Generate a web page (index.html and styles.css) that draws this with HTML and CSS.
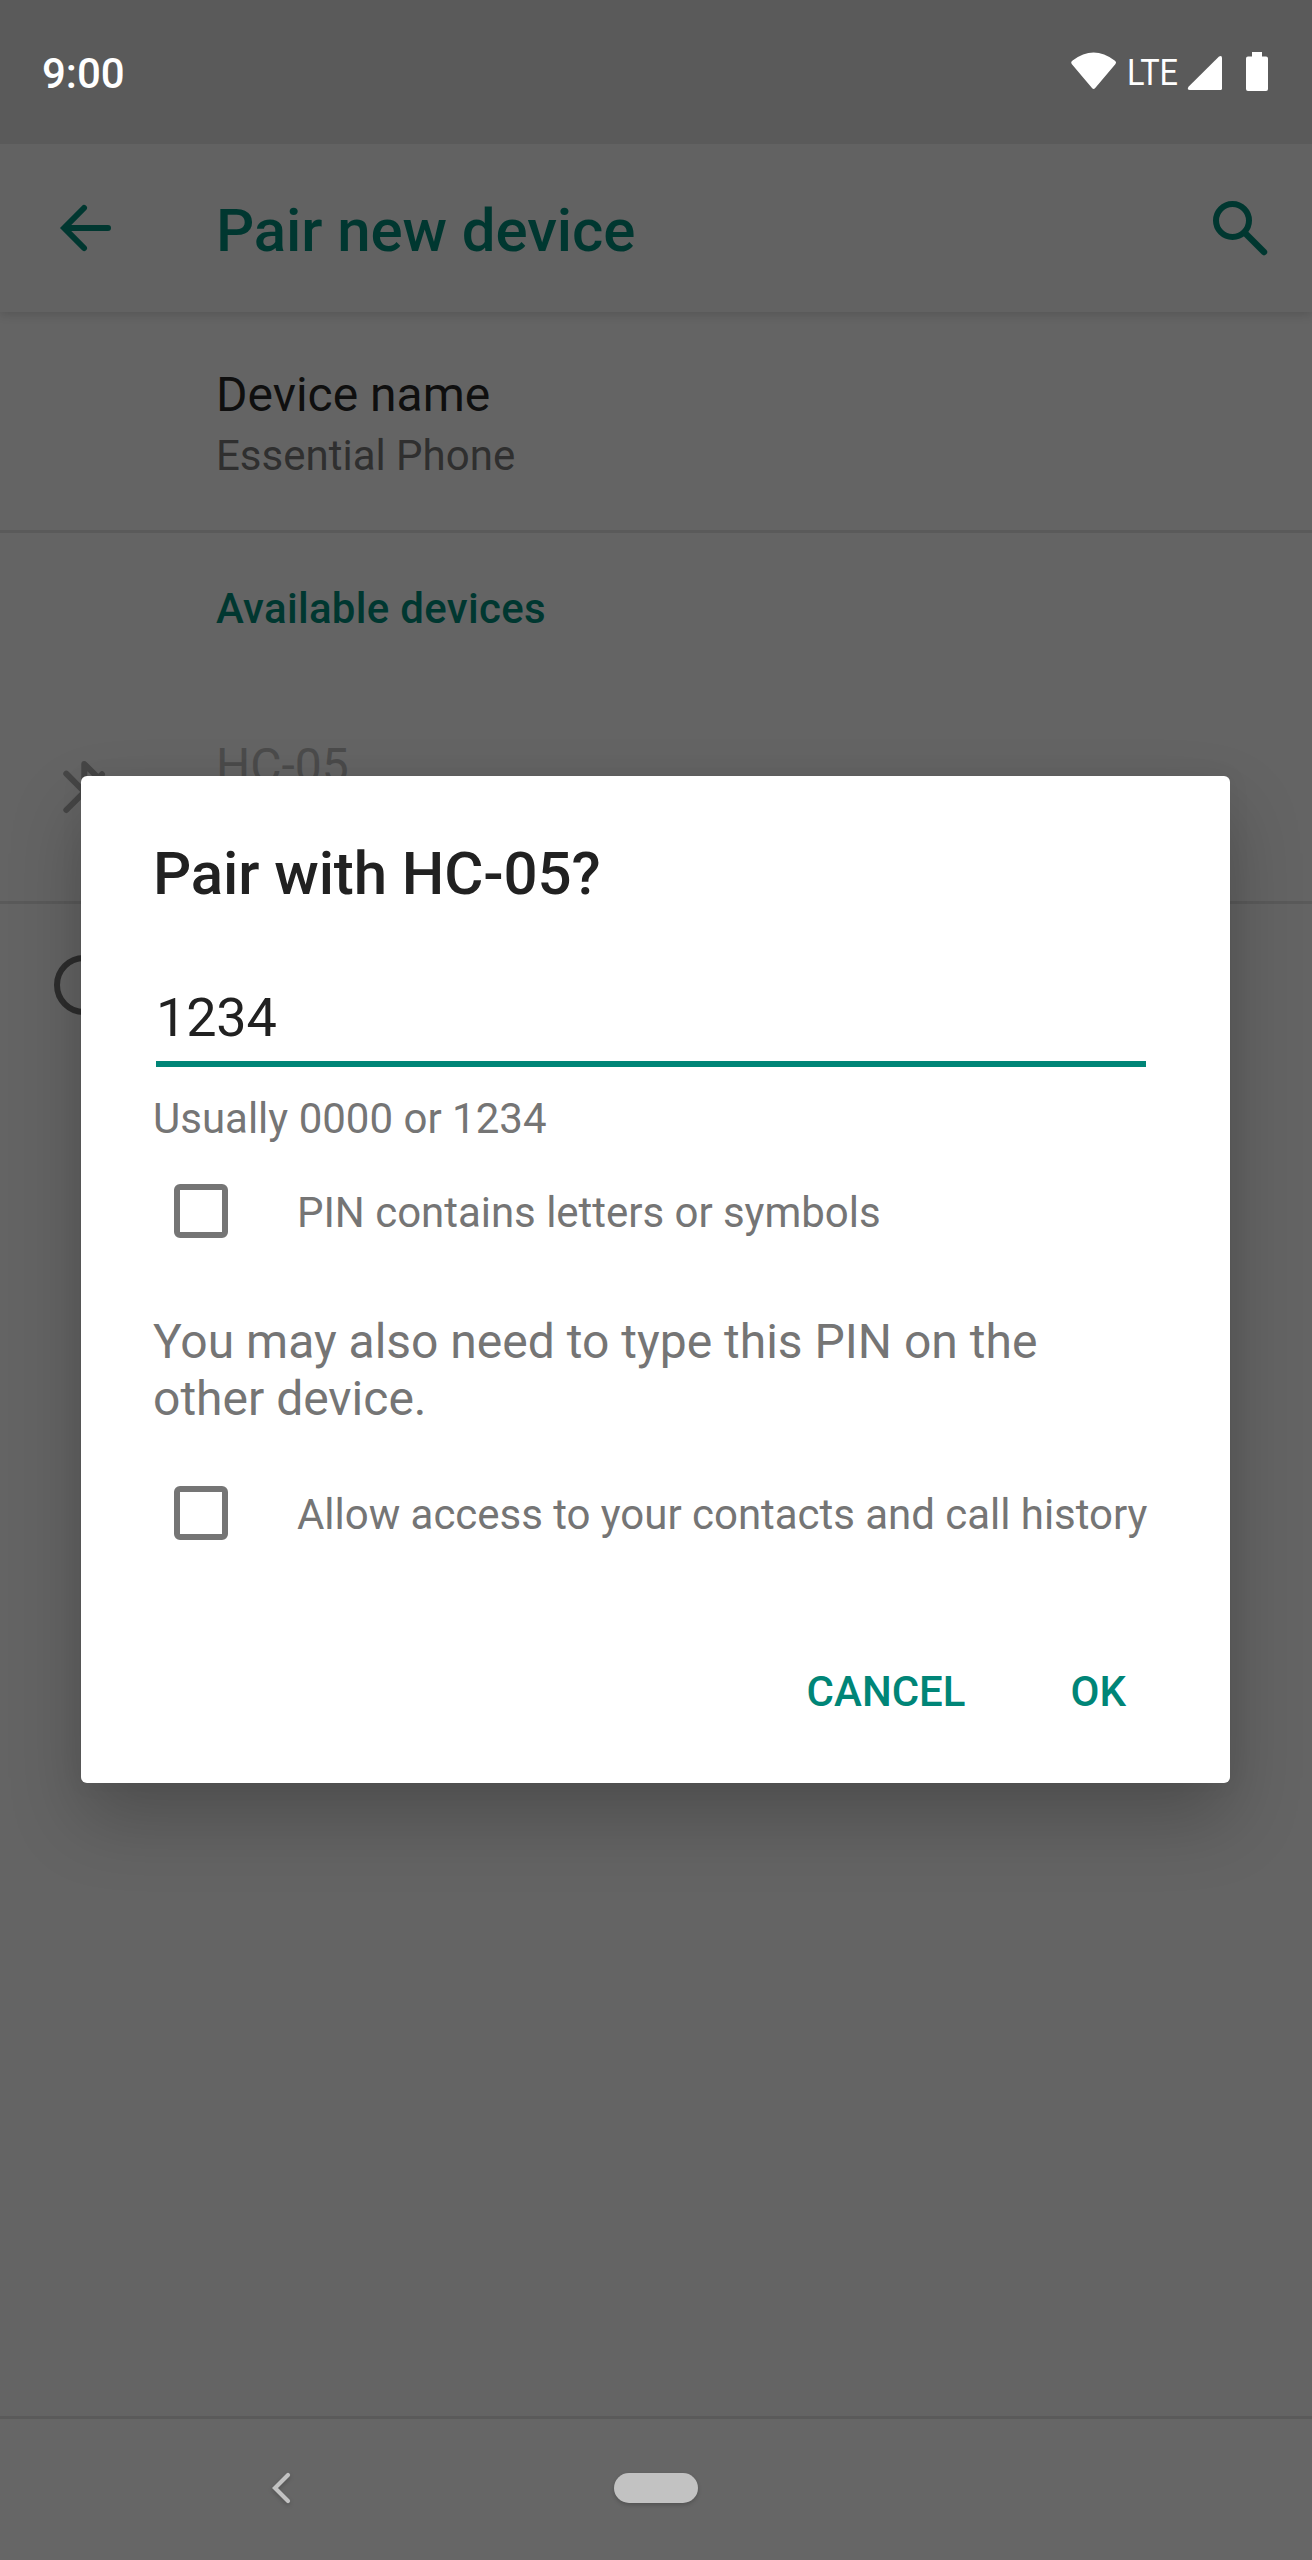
FILE: index.html
```html
<!DOCTYPE html>
<html lang="en">
<head>
<meta charset="utf-8">
<title>Pair new device</title>
<link rel="stylesheet" href="styles.css">
</head>
<body>
<div class="screen">
  <header class="status-bar">
    <span class="clock">9:00</span>
    <svg class="status-icons" width="204" height="48" viewBox="0 0 204 48" fill="#fff">
      <path d="M3.600 12.400Q24.600 -3.600 45.600 12.400Q48 14 46.300 16.200L26 40.200Q24.600 41.800 23.200 40.200L2.900 16.200Q1.200 14 3.600 12.400Z"/>
      <text class="network" x="58" y="36.500" textLength="51" lengthAdjust="spacingAndGlyphs">LTE</text>
      <path d="M150 8.500Q153 7 153 10V40.500Q153 42 151.500 42H121Q117.500 42 119.500 38.800Z"/>
      <path d="M183 4h10v4.400h4Q199 8.400 199 10.400V41Q199 43 197 43H179Q177 43 177 41V10.400Q177 8.400 179 8.400H183Z"/>
    </svg>
  </header>

  <div class="app-bar">
    <svg class="back" width="72" height="72" viewBox="0 0 72 72">
      <path d="M36 16L16.200 36L36 56M17 36H60" fill="none" stroke="currentColor" stroke-width="6" stroke-linecap="round"/>
    </svg>
    <h1 class="app-title">Pair new device</h1>
    <svg class="search" width="72" height="72" viewBox="0 0 72 72">
      <circle cx="28.500" cy="28.500" r="16.500" fill="none" stroke="currentColor" stroke-width="6"/>
      <path d="M41 41L60 60" fill="none" stroke="currentColor" stroke-width="6.400" stroke-linecap="round"/>
    </svg>
  </div>

  <main class="list">
    <section class="item device-name">
      <div class="item-title">Device name</div>
      <div class="item-summary">Essential Phone</div>
    </section>
    <h2 class="section-title">Available devices</h2>
    <section class="item found-device">
      <svg class="bluetooth" width="72" height="72" viewBox="0 0 72 72">
        <path d="M18.300 17.700L53 52.500L36.300 64V8L54 25.700M18.300 54L54 18.300" fill="none" stroke="currentColor" stroke-width="6" stroke-linecap="round" stroke-linejoin="round"/>
      </svg>
      <div class="item-title">HC-05</div>
    </section>
    <section class="item info">
      <svg width="72" height="72" viewBox="0 0 72 72">
        <circle cx="36" cy="36" r="27" fill="none" stroke="currentColor" stroke-width="6"/>
      </svg>
    </section>
  </main>

  <nav class="nav-bar">
    <svg class="nav-back" width="28" height="40" viewBox="0 0 28 40">
      <path d="M21 7L8 20L21 33" fill="none" stroke="#c2c2c2" stroke-width="4.200" stroke-linecap="round"/>
    </svg>
    <span class="nav-home"></span>
  </nav>

  <div class="dialog" role="dialog">
    <h2 class="dialog-title">Pair with HC-05?</h2>
    <input class="pin" type="text" value="1234">
    <div class="hint">Usually 0000 or 1234</div>
    <label class="check-row">
      <span class="box"></span><span class="check-label">PIN contains letters or symbols</span>
    </label>
    <p class="message">You may also need to type this PIN on the other device.</p>
    <label class="check-row">
      <span class="box"></span><span class="check-label">Allow access to your contacts and call history</span>
    </label>
    <div class="actions">
      <span>CANCEL</span>
      <span>OK</span>
    </div>
  </div>
</div>
</body>
</html>
```
FILE: styles.css
```css
* {
  box-sizing: border-box;
}

body,
h1,
h2,
p {
  margin: 0;
}

body {
  font-family: Roboto, "Liberation Sans", sans-serif;
  font-weight: 400;
}

svg {
  display: block;
  flex: none;
}

.screen {
  position: relative;
  display: flex;
  flex-direction: column;
  width: 1312px;
  height: 2560px;
  overflow: hidden;
  background: #646464;
}

/* Status bar */
.status-bar {
  position: relative;
  z-index: 1;
  display: flex;
  justify-content: space-between;
  height: 144px;
  padding: 48px 39px 0 42px;
  background: #5a5a5a;
  color: #fff;
}

.clock {
  font-size: 42px;
  font-weight: 500;
  line-height: 51px;
}

.network {
  font-size: 36.500px;
}

/* App bar */
.app-bar {
  position: relative;
  display: flex;
  align-items: center;
  height: 168px;
  padding: 0 36px 0 48px;
  background: #626262;
  color: #003730;
  box-shadow: 0 2px 10px rgba(0, 0, 0, .16);
}

.app-title {
  flex: 1;
  margin-left: 96px;
  padding-top: 5px;
  font-size: 60px;
  font-weight: 500;
  letter-spacing: -.1px;
  line-height: 70px;
}

/* Preference list */
.list {
  flex: 1;
}

.item-title {
  color: #0f0f0f;
  font-size: 48px;
  line-height: 60px;
}

.item-summary {
  margin-top: 6px;
  color: #2f2f2f;
  font-size: 42px;
  line-height: 50px;
}

.device-name {
  height: 221px;
  padding: 53px 0 0 216px;
  border-bottom: 3px solid #5a5a5a;
}

.section-title {
  height: 168px;
  padding: 51px 0 0 216px;
  color: #003730;
  font-size: 42px;
  font-weight: 500;
  letter-spacing: .3px;
  line-height: 50px;
}

.found-device {
  display: flex;
  gap: 96px;
  height: 203px;
  padding: 35px 0 0 48px;
  border-bottom: 3px solid #5a5a5a;
  color: #464646;
}

.found-device .item-title {
  color: #4b4b4b;
}

.bluetooth {
  margin-top: 20px;
}

.info {
  display: flex;
  align-items: center;
  height: 162px;
  padding-left: 48px;
  color: #2d2d2d;
}

/* Navigation bar */
.nav-bar {
  display: flex;
  align-items: center;
  height: 144px;
  padding: 0 0 0 267px;
  border-top: 3px solid #5a5a5a;
  background: #666;
}

.nav-back {
  margin-top: -3px;
  filter: drop-shadow(0 2px 2px rgba(0, 0, 0, .2));
}

.nav-home {
  width: 84px;
  height: 30px;
  margin: -3px 0 0 319px;
  border-radius: 15px;
  background: #c2c2c2;
  box-shadow: 0 2px 4px rgba(0, 0, 0, .2);
}

/* Pairing dialog */
.dialog {
  position: absolute;
  top: 776px;
  left: 81px;
  width: 1149px;
  height: 1007px;
  padding: 63px 72px 0;
  border-radius: 6px;
  background: #fff;
  color: #757575;
  box-shadow: 0 36px 72px rgba(0, 0, 0, .22), 0 0 24px rgba(0, 0, 0, .05);
}

.dialog-title {
  color: #212121;
  font-size: 60px;
  font-weight: 500;
  letter-spacing: -.1px;
  line-height: 70px;
}

.pin {
  display: block;
  width: 990px;
  height: 81px;
  margin: 77px 0 0 3px;
  padding: 0 0 13px;
  border: 0;
  border-bottom: 6px solid #008577;
  border-radius: 0;
  outline: 0;
  background: none;
  color: #212121;
  font: 400 54px/62px Roboto, "Liberation Sans", sans-serif;
  letter-spacing: -.2px;
}

.hint {
  margin: 27px 0 -1px;
  font-size: 42px;
  line-height: 50px;
}

.check-row {
  display: flex;
  height: 54px;
  margin: 41px 0 0 21px;
}

.box {
  flex: none;
  width: 54px;
  height: 54px;
  border: 6px solid #757575;
  border-radius: 6px;
}

.check-label {
  margin-left: 69px;
  padding-top: 2px;
  font-size: 42px;
  letter-spacing: -.03px;
  line-height: 54px;
  white-space: nowrap;
}

.message {
  margin-top: 75px;
  font-size: 48px;
  line-height: 57px;
}

.message + .check-row {
  margin-top: 59px;
}

.actions {
  display: flex;
  justify-content: flex-end;
  gap: 105px;
  margin-top: 127px;
  padding-right: 32px;
  color: #008577;
  font-size: 42px;
  font-weight: 500;
  line-height: 50px;
}
```
